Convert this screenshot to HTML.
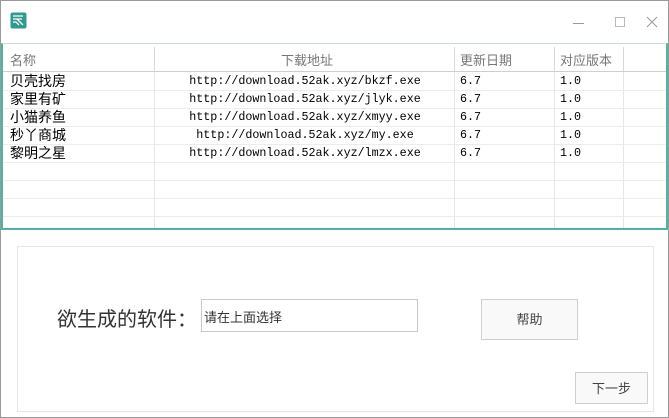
<!DOCTYPE html>
<html><head><meta charset="utf-8"><style>
*{margin:0;padding:0;box-sizing:border-box}
body{width:669px;height:418px;background:#fff;position:relative;overflow:hidden;font-family:"Liberation Sans","Noto Sans CJK SC",sans-serif;border:1px solid #9a9a9a}
.abs{position:absolute}
.mono{font-family:"Liberation Mono","Noto Sans CJK SC",monospace;font-size:11.7px}
.tbl{left:0;top:42px;width:667px;height:187px;border:2px solid #4db3a5;border-top:1px solid #c9dcd9;background:#fff;overflow:hidden}
.hl{height:1px;background:#ececec;left:0;width:663px}
.vl{width:1px;background:#e6e6e6;top:0;height:184px}
.row{left:0;height:18px;width:663px;font-size:14px;line-height:18px;color:#000}
</style></head><body>
<div class="abs" style="left:0;top:0;width:667px;height:42px;background:#fff"></div>
<svg class="abs" style="left:9px;top:11px" width="17" height="17" viewBox="0 0 17 17"><rect x="0.5" y="0.5" width="16" height="16" rx="2" fill="#2f9a8e"/><path d="M3 4h10M3 7h4l6 6M3 10h3l3 3M7 7l5 0" stroke="#fff" stroke-width="1.3" fill="none"/></svg>
<div class="abs" style="left:572px;top:22px;width:11px;height:1px;background:#999"></div>
<div class="abs" style="left:614px;top:16px;width:10px;height:10px;border:1px solid #bbb"></div>
<svg class="abs" style="left:645px;top:15px" width="12" height="12"><path d="M1 1L11 11M11 1L1 11" stroke="#999" stroke-width="1"/></svg>
<div class="abs tbl">
 <div class="abs hl" style="top:27px;background:#cfcfcf"></div>
 <div class="abs vl" style="left:151px;top:3px;background:#d8d8d8;height:24px"></div>
 <div class="abs vl" style="left:451px;top:3px;background:#d8d8d8;height:24px"></div>
 <div class="abs vl" style="left:551px;top:3px;background:#d8d8d8;height:24px"></div>
 <div class="abs vl" style="left:620px;top:3px;background:#d8d8d8;height:24px"></div>
 <div class="abs vl" style="left:151px;top:28px"></div>
 <div class="abs vl" style="left:451px;top:28px"></div>
 <div class="abs vl" style="left:551px;top:28px"></div>
 <div class="abs vl" style="left:620px;top:28px"></div>
 <div class="abs" style="left:7px;top:6px;font-size:13px;color:#777">名称</div>
 <div class="abs" style="left:278px;top:6px;font-size:13px;color:#777">下载地址</div>
 <div class="abs" style="left:457px;top:6px;font-size:13px;color:#777">更新日期</div>
 <div class="abs" style="left:557px;top:6px;font-size:13px;color:#777">对应版本</div>
 <div class="abs hl" style="top:46px"></div><div class="abs hl" style="top:64px"></div><div class="abs hl" style="top:82px"></div><div class="abs hl" style="top:100px"></div><div class="abs hl" style="top:118px"></div><div class="abs hl" style="top:136px"></div><div class="abs hl" style="top:154px"></div><div class="abs hl" style="top:172px"></div>
 <div class="abs row" style="top:28px"><span class="abs" style="left:7px">贝壳找房</span><span class="abs mono" style="left:152px;width:300px;text-align:center">http://download.52ak.xyz/bkzf.exe</span><span class="abs mono" style="left:457px">6.7</span><span class="abs mono" style="left:557px">1.0</span></div>
 <div class="abs row" style="top:46px"><span class="abs" style="left:7px">家里有矿</span><span class="abs mono" style="left:152px;width:300px;text-align:center">http://download.52ak.xyz/jlyk.exe</span><span class="abs mono" style="left:457px">6.7</span><span class="abs mono" style="left:557px">1.0</span></div>
 <div class="abs row" style="top:64px"><span class="abs" style="left:7px">小猫养鱼</span><span class="abs mono" style="left:152px;width:300px;text-align:center">http://download.52ak.xyz/xmyy.exe</span><span class="abs mono" style="left:457px">6.7</span><span class="abs mono" style="left:557px">1.0</span></div>
 <div class="abs row" style="top:82px"><span class="abs" style="left:7px">秒丫商城</span><span class="abs mono" style="left:152px;width:300px;text-align:center">http://download.52ak.xyz/my.exe</span><span class="abs mono" style="left:457px">6.7</span><span class="abs mono" style="left:557px">1.0</span></div>
 <div class="abs row" style="top:100px"><span class="abs" style="left:7px">黎明之星</span><span class="abs mono" style="left:152px;width:300px;text-align:center">http://download.52ak.xyz/lmzx.exe</span><span class="abs mono" style="left:457px">6.7</span><span class="abs mono" style="left:557px">1.0</span></div>
</div>
<div class="abs" style="left:16px;top:245px;width:637px;height:166px;border:1px solid #e6e6e6"></div>
<div class="abs" style="left:56px;top:302px;font-size:20px;color:#333">欲生成的软件：</div>
<div class="abs" style="left:200px;top:298px;width:217px;height:33px;border:1px solid #c8c8c8;font-size:13px;color:#333;padding:7px 0 0 2px">请在上面选择</div>
<div class="abs" style="left:480px;top:298px;width:97px;height:41px;border:1px solid #cfcfcf;background:#f9f9f9;font-size:13px;color:#444;text-align:center;line-height:40px">帮助</div>
<div class="abs" style="left:574px;top:371px;width:73px;height:32px;border:1px solid #cfcfcf;background:#f9f9f9;font-size:13px;color:#444;text-align:center;line-height:31px">下一步</div>
</body></html>
